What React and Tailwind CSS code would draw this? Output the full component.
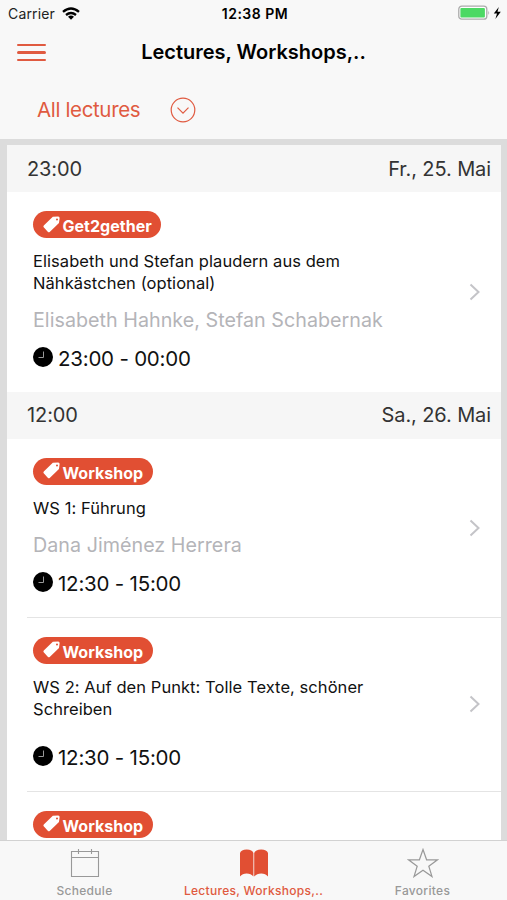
import React from 'react';

const sections = [
    {
        time: '23:00',
        date: 'Fr., 25. Mai',
        lectures: [
            {
                id: 1,
                tag: 'Get2gether',
                title: ['Elisabeth und Stefan plaudern aus dem', 'Nähkästchen (optional)'],
                speakers: 'Elisabeth Hahnke, Stefan Schabernak',
                time: '23:00 - 00:00',
                height: 'h-[200px]',
            },
        ],
    },
    {
        time: '12:00',
        date: 'Sa., 26. Mai',
        lectures: [
            {
                id: 2,
                tag: 'Workshop',
                title: ['WS 1: Führung'],
                speakers: 'Dana Jiménez Herrera',
                time: '12:30 - 15:00',
                height: 'h-[179px]',
            },
            {
                id: 3,
                tag: 'Workshop',
                title: ['WS 2: Auf den Punkt: Tolle Texte, schöner', 'Schreiben'],
                time: '12:30 - 15:00',
                height: 'h-[174px]',
            },
            { id: 4, tag: 'Workshop', title: [], height: 'h-[174px]' },
        ],
    },
];

const StatusBar = () => (
    <div className="flex h-[27px] items-center justify-between pl-2 pr-[5px]">
        <div className="flex w-[120px] items-center gap-[7px]">
            <span className="text-[14px] tracking-[0.15px] text-[#222]">Carrier</span>
            <svg width="18" height="13" viewBox="0 0 18 13" fill="none" stroke="#000" strokeWidth="2.3">
                <path d="M1 4.9Q9-2 17 4.9" />
                <path d="M4 8Q9 3.9 14 8" />
                <path d="M9 12.7L6 9.7Q9 7.4 12 9.7Z" fill="#000" stroke="none" />
            </svg>
        </div>
        <span className="text-[14px] font-semibold tracking-[0.5px] text-black">12:38 PM</span>
        <div className="flex w-[120px] items-center justify-end">
            <svg width="44" height="16" viewBox="0 0 44 16" className="-mt-px">
                <rect x="0.8" y="1.2" width="28" height="13" rx="3" fill="#fff" stroke="#aaa" strokeWidth="1.3" />
                <rect x="2.4" y="3" width="24.5" height="9.4" rx="1" fill="#4cd964" />
                <path d="M30.3 5.5Q32 7.7 30.3 10Z" fill="#aaa" />
                <path d="M40.8 2L35.8 8.5H39L37.4 14L42.8 6.8H39.5Z" fill="#000" />
            </svg>
        </div>
    </div>
);

const Header = () => (
    <header className="h-[139px] shrink-0 bg-[#f8f8f8]">
        <StatusBar />
        <div className="grid h-[51px] grid-cols-[60px_1fr_60px] items-center">
            <button className="ml-[16.5px] flex w-[29px] flex-col gap-[5px]" aria-label="Menu">
                <span className="h-[2.5px] w-full rounded-full bg-[#e05a40]" />
                <span className="h-[2.5px] w-full rounded-full bg-[#e05a40]" />
                <span className="h-[2.5px] w-full rounded-full bg-[#e05a40]" />
            </button>
            <h1 className="whitespace-nowrap pb-[2px] text-center text-[20px] font-semibold text-black">
                Lectures, Workshops,..
            </h1>
        </div>
        <div className="flex h-[63px] items-center gap-[30px] pl-[37px] text-[#e05a40]">
            <span className="w-[103px] whitespace-nowrap pt-px text-[20.5px] tracking-[-0.35px]">All lectures</span>
            <svg width="26" height="26" viewBox="0 0 26 26" fill="none" stroke="currentColor" strokeWidth="1.2">
                <circle cx="13" cy="13" r="11.8" />
                <path d="M7.5 10.7L13 16.2L18.5 10.7" />
            </svg>
        </div>
    </header>
);

const TagBadge = ({ children }) => (
    <span className="flex h-[27px] w-fit items-center gap-[3px] rounded-full bg-[#e14f33] pl-[9.5px] pr-[9.5px] text-[16px] font-bold tracking-[0.02px] text-white">
        <svg width="17" height="17" viewBox="0 0 17 17" className="-mt-px">
            <path
                fill="#fff"
                fillRule="evenodd"
                d="M9.8 .8L15.2 .6Q16.8.6 16.6 2.3L16 7L6.7 15.9Q5.8 16.7 5 15.9L.7 11.3Q0 10.4.8 9.5ZM14 2.5A1 1 0 1 0 14 4.5A1 1 0 1 0 14 2.5Z"
            />
        </svg>
        <span className="pt-[3px]">{children}</span>
    </span>
);

const ClockIcon = () => (
    <svg width="20" height="20" viewBox="0 0 20 20" className="-mt-1">
        <circle cx="10" cy="10" r="10" fill="#000" />
        <path d="M10.5 4.5V10.5H5.5" fill="none" stroke="#999" strokeWidth="1" />
    </svg>
);

const LectureRow = ({ lecture, last }) => (
    <div className={`ml-[20px] flex items-center ${lecture.height} ${last ? '' : 'border-b border-[#e4e4e4]'}`}>
        <div className="h-full min-w-0 flex-1 pl-[6px] pt-[19px]">
            <TagBadge>{lecture.tag}</TagBadge>
            <div className="mt-[12px] text-[16.5px] leading-[22px] tracking-[0.06px] text-[#111]">
                {lecture.title.map((line) => (
                    <p key={line} className="whitespace-nowrap">{line}</p>
                ))}
            </div>
            {lecture.speakers && (
                <p className="mt-[13px] whitespace-nowrap text-[19.7px] leading-[26px] tracking-[0.03px] text-[#b4b4b8]">
                    {lecture.speakers}
                </p>
            )}
            {lecture.time && (
                <p className={`flex h-[26px] items-center gap-[5px] text-[20.5px] leading-[26px] tracking-[-0.22px] text-[#111] ${lecture.speakers ? 'mt-[13px]' : 'mt-[25px]'}`}>
                    <ClockIcon /> {lecture.time}
                </p>
            )}
        </div>
        <svg width="12" height="18" viewBox="0 0 12 18" className="mr-[20px]" fill="none" stroke="#c4c4c8" strokeWidth="2">
            <path d="M1.5 1.5L9.5 9L1.5 16.5" />
        </svg>
    </div>
);

const TabBar = () => (
    <nav className="grid h-[60px] shrink-0 grid-cols-3 border-t border-[#d2d2d2] bg-[#f8f8f8] text-[12px] font-medium tracking-[0.3px] text-[#999]">
        <div className="flex flex-col items-center pt-[7px]">
            <svg width="30" height="30" viewBox="0 0 30 30" fill="none" stroke="#999" strokeWidth="1.1">
                <path d="M1.5 3.5H28.5V28.5H1.5ZM1.5 9.5H28.5M8.5 1V6M21.5 1V6" />
            </svg>
            <span className="mt-[4px]">Schedule</span>
        </div>
        <div className="flex flex-col items-center pt-[7px] text-[#e05a40]">
            <svg width="30" height="30" viewBox="0 0 30 30" fill="#e14f33">
                <path d="M1 5Q2 1.5 7.7 1.5T14.4 5V28.5Q12 25.5 7.7 25.5T1 28.5Z" />
                <path d="M15.2 5Q16.5 1.5 22.2 1.5T29 5V28.5Q26.5 25.5 22.2 25.5T15.2 28.5Z" />
            </svg>
            <span className="mt-[4px] whitespace-nowrap">Lectures, Workshops,..</span>
        </div>
        <div className="flex flex-col items-center pt-[7px]">
            <svg width="32" height="30" viewBox="0 0 32 30" fill="none" stroke="#999" strokeWidth="1.2">
                <path d="M16 1.5L19.6 11.8H30.5L21.8 18.2L25 28.6L16 22.3L7 28.6L10.2 18.2L1.5 11.8H12.4Z" />
            </svg>
            <span className="mt-[4px]">Favorites</span>
        </div>
    </nav>
);

const App = () => {
    return (
        <div className="flex h-[900px] w-[507px] flex-col overflow-hidden bg-white font-['Inter',sans-serif]">
            <Header />
            <main className="min-h-0 flex-1 overflow-hidden bg-[#dcdcdc] pl-[7px] pr-[6px] pt-[6px]">
                <div className="bg-white">
                    {sections.map((section, i) => (
                        <section key={section.time}>
                            <div className={`flex items-center justify-between bg-[#f6f6f6] pl-[20px] pr-[10px] text-[20px] tracking-[-0.1px] text-[#333] ${i === 0 ? 'h-[47px]' : 'h-[46.5px]'}`}>
                                <span>{section.time}</span>
                                <span>{section.date}</span>
                            </div>
                            {section.lectures.map((lecture, j) => (
                                <LectureRow
                                    key={lecture.id}
                                    lecture={lecture}
                                    last={j === section.lectures.length - 1}
                                />
                            ))}
                        </section>
                    ))}
                </div>
            </main>
            <TabBar />
        </div>
    );
};

export default App;
